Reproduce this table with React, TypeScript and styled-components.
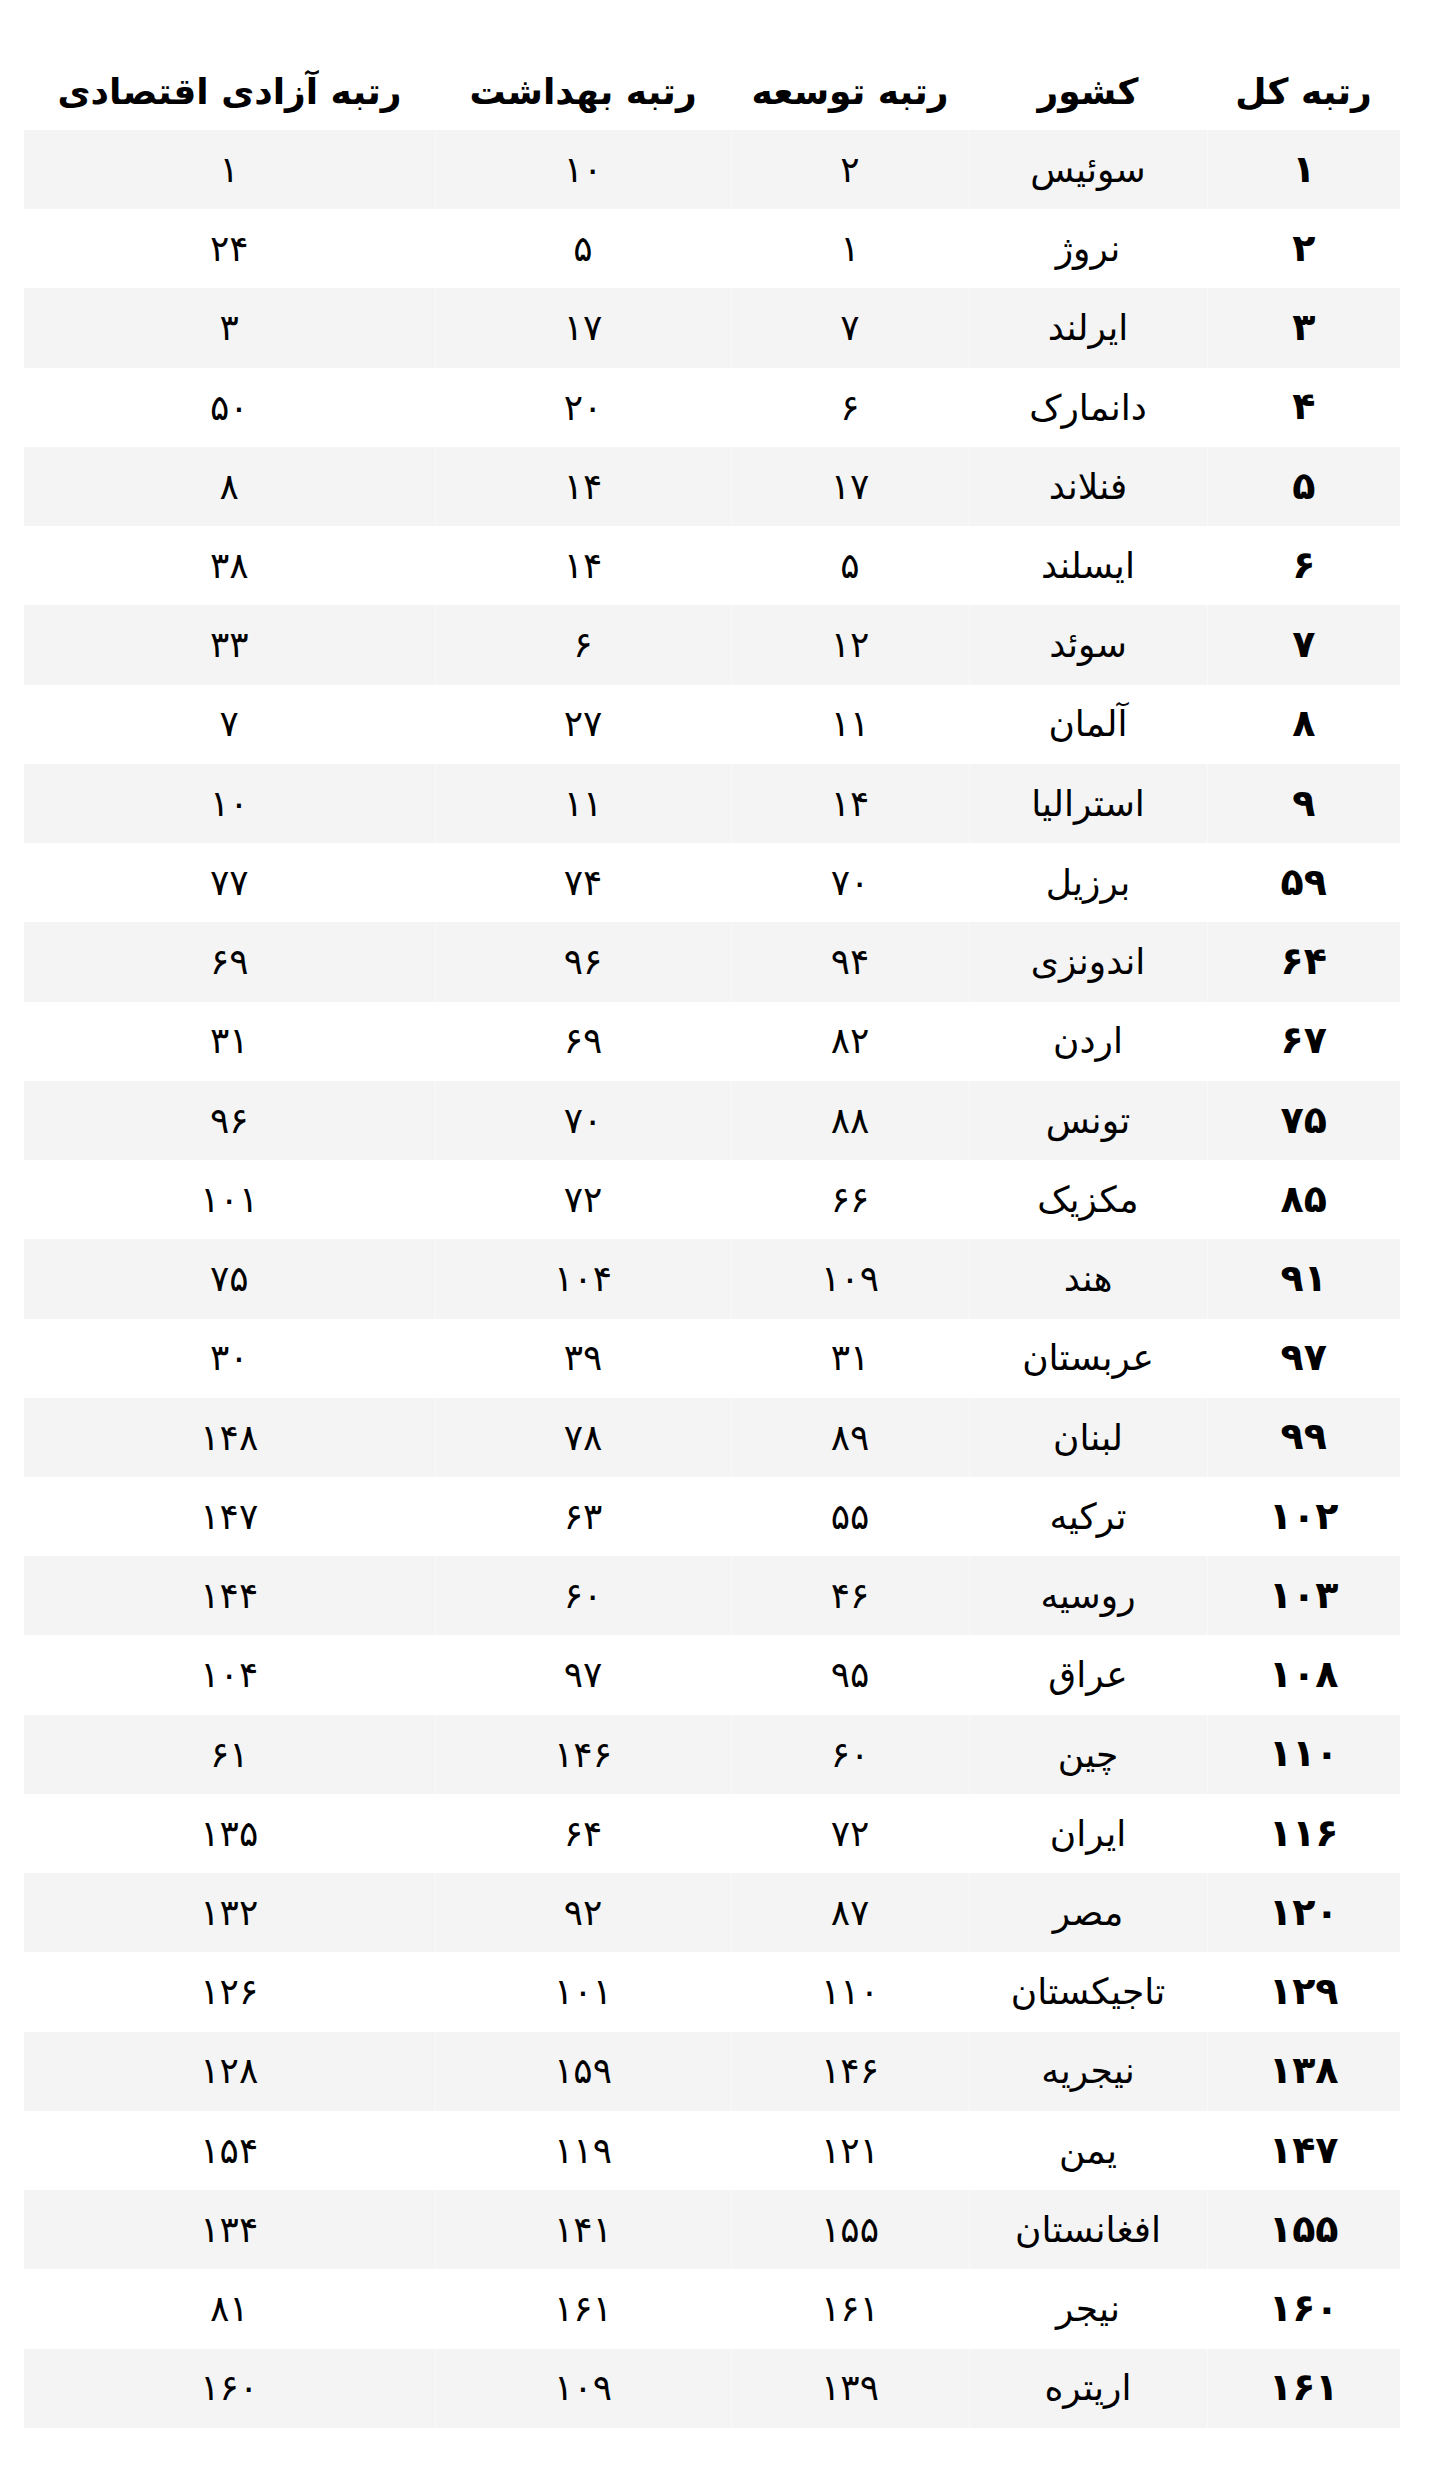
import React from "react";
import styled, { createGlobalStyle } from "styled-components";

const GlobalStyle = createGlobalStyle`
  html, body {
    margin: 0;
    padding: 0;
    background: #ffffff;
  }
  body {
    font-family: "DejaVu Sans", "Noto Sans", sans-serif;
    color: #000000;
  }
`;

const Page = styled.div`
  padding: 50px 37px 40px 24px;
  direction: rtl;
`;

const Table = styled.table`
  width: 1376px;
  border-collapse: collapse;
  table-layout: fixed;
  direction: rtl;
  font-family: "DejaVu Sans", sans-serif;
`;

const HeadRow = styled.tr`
  height: 80px;
`;

const HeadCell = styled.th`
  height: 76px;
  padding: 4px 0 0;
  text-align: center;
  vertical-align: middle;
  font-size: 36px;
  font-weight: 700;
  line-height: 1.1;
  color: #000;
  white-space: nowrap;
`;

const Row = styled.tr<{ $striped: boolean }>`
  height: 79.24px;
  background: ${(p) => (p.$striped ? "#f4f4f4" : "#ffffff")};
`;

const Cell = styled.td<{ $bold?: boolean }>`
  padding: 0;
  text-align: center;
  vertical-align: middle;
  font-size: ${(p) => (p.$bold ? "38px" : "36px")};
  font-weight: ${(p) => (p.$bold ? 700 : 400)};
  line-height: 1.1;
  color: #000;
  white-space: nowrap;
  border-left: 1px solid rgba(255, 255, 255, 0.45);
  &:last-child {
    border-left: none;
  }
`;

const toFa = (n: number) =>
  String(n).replace(/\d/g, (d) => String.fromCharCode(0x06f0 + Number(d)));

type R = [number, string, number, number, number];

const rows: R[] = [
  [1, "سوئیس", 2, 10, 1],
  [2, "نروژ", 1, 5, 24],
  [3, "ایرلند", 7, 17, 3],
  [4, "دانمارک", 6, 20, 50],
  [5, "فنلاند", 17, 14, 8],
  [6, "ایسلند", 5, 14, 38],
  [7, "سوئد", 12, 6, 33],
  [8, "آلمان", 11, 27, 7],
  [9, "استرالیا", 14, 11, 10],
  [59, "برزیل", 70, 74, 77],
  [64, "اندونزی", 94, 96, 69],
  [67, "اردن", 82, 69, 31],
  [75, "تونس", 88, 70, 96],
  [85, "مکزیک", 66, 72, 101],
  [91, "هند", 109, 104, 75],
  [97, "عربستان", 31, 39, 30],
  [99, "لبنان", 89, 78, 148],
  [102, "ترکیه", 55, 63, 147],
  [103, "روسیه", 46, 60, 144],
  [108, "عراق", 95, 97, 104],
  [110, "چین", 60, 146, 61],
  [116, "ایران", 72, 64, 135],
  [120, "مصر", 87, 92, 132],
  [129, "تاجیکستان", 110, 101, 126],
  [138, "نیجریه", 146, 159, 128],
  [147, "یمن", 121, 119, 154],
  [155, "افغانستان", 155, 141, 134],
  [160, "نیجر", 161, 161, 81],
  [161, "اریتره", 139, 109, 160],
];

const headers = ["رتبه کل", "کشور", "رتبه توسعه", "رتبه بهداشت", "رتبه آزادی اقتصادی"];
const widths = [193, 238, 238, 296, 411];

export default function App() {
  return (
    <>
      <GlobalStyle />
      <Page>
        <Table>
          <colgroup>
            {widths.map((w, i) => (
              <col key={i} style={{ width: `${w}px` }} />
            ))}
          </colgroup>
          <thead>
            <HeadRow>
              {headers.map((h) => (
                <HeadCell key={h}>{h}</HeadCell>
              ))}
            </HeadRow>
          </thead>
          <tbody>
            {rows.map((r, i) => (
              <Row key={r[0]} $striped={i % 2 === 0}>
                <Cell $bold>{toFa(r[0])}</Cell>
                <Cell>{r[1]}</Cell>
                <Cell>{toFa(r[2])}</Cell>
                <Cell>{toFa(r[3])}</Cell>
                <Cell>{toFa(r[4])}</Cell>
              </Row>
            ))}
          </tbody>
        </Table>
      </Page>
    </>
  );
}
